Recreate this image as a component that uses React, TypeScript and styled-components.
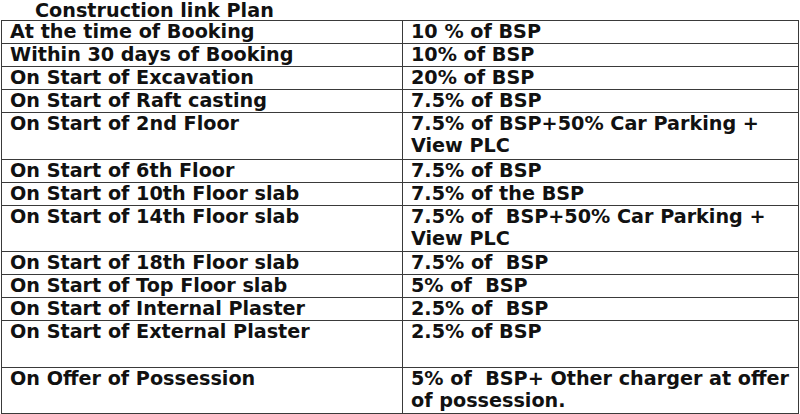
import * as React from 'react';
import styled, { createGlobalStyle } from 'styled-components';

const GlobalStyle = createGlobalStyle`
  html, body {
    margin: 0;
    padding: 0;
    background: #fff;
  }
  body {
    font-family: "DejaVu Sans", "Liberation Sans", sans-serif;
    color: #111;
  }
`;

const Wrapper = styled.div`
  width: 800px;
  height: 414px;
  overflow: hidden;
`;

const Title = styled.div`
  height: 20px;
  line-height: 21px;
  padding-left: 35px;
  font-size: 19.2px;
  font-weight: bold;
`;

const Table = styled.table`
  margin-left: 1px;
  width: 797px;
  border-collapse: collapse;
  table-layout: fixed;
`;

const Cell = styled.td<{ $double?: boolean }>`
  border: 1px solid #3a3a3a;
  padding: 0 0 0 8px;
  height: ${p => (p.$double ? 45.5 : 22)}px;
  vertical-align: top;
  font-size: 19.2px;
  font-weight: bold;
  line-height: 22px;
`;

interface IRow {
  stage: string,
  payment: string,
  double?: boolean
}

const rows: IRow[] = [
  { stage: 'At the time of Booking', payment: '10 % of BSP' },
  { stage: 'Within 30 days of Booking', payment: '10% of BSP' },
  { stage: 'On Start of Excavation', payment: '20% of BSP' },
  { stage: 'On Start of Raft casting', payment: '7.5% of BSP' },
  { stage: 'On Start of 2nd Floor', payment: '7.5% of BSP+50% Car Parking + View PLC', double: true },
  { stage: 'On Start of 6th Floor', payment: '7.5% of BSP' },
  { stage: 'On Start of 10th Floor slab', payment: '7.5% of the BSP' },
  { stage: 'On Start of 14th Floor slab', payment: '7.5% of\u00a0 BSP+50% Car Parking + View PLC', double: true },
  { stage: 'On Start of 18th Floor slab', payment: '7.5% of\u00a0 BSP' },
  { stage: 'On Start of Top Floor slab', payment: '5% of\u00a0 BSP' },
  { stage: 'On Start of Internal Plaster', payment: '2.5% of\u00a0 BSP' },
  { stage: 'On Start of External Plaster', payment: '2.5% of BSP', double: true },
  { stage: 'On Offer of Possession', payment: '5% of\u00a0 BSP+ Other charger at offer of possession.', double: true },
];

export default function App() {
  return (
    <Wrapper>
      <GlobalStyle />
      <Title>Construction link Plan</Title>
      <Table>
        <colgroup>
          <col style={{ width: 401 }} />
          <col style={{ width: 396 }} />
        </colgroup>
        <tbody>
          {rows.map(row => (
            <tr key={row.stage}>
              <Cell $double={row.double}>{row.stage}</Cell>
              <Cell $double={row.double}>{row.payment}</Cell>
            </tr>
          ))}
        </tbody>
      </Table>
    </Wrapper>
  );
}
